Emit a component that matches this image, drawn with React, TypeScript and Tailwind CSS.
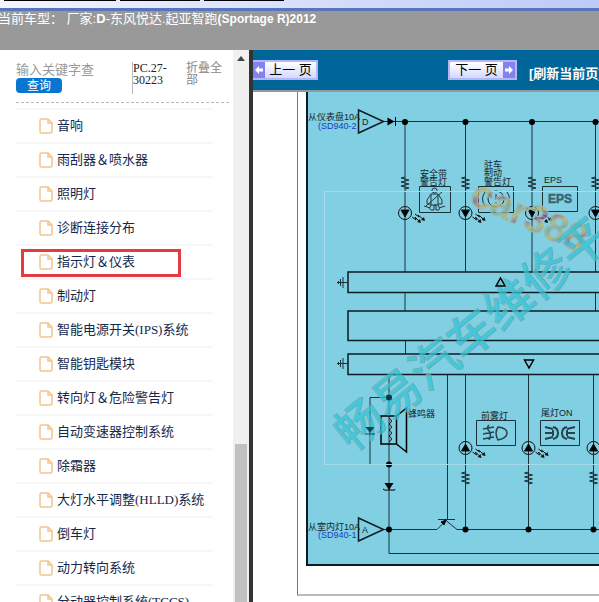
import React from "react";

const items = [
  "音响",
  "雨刮器＆喷水器",
  "照明灯",
  "诊断连接分布",
  "指示灯＆仪表",
  "制动灯",
  "智能电源开关(IPS)系统",
  "智能钥匙模块",
  "转向灯＆危险警告灯",
  "自动变速器控制系统",
  "除霜器",
  "大灯水平调整(HLLD)系统",
  "倒车灯",
  "动力转向系统",
  "分动器控制系统(TCCS)",
];

const selected = "指示灯＆仪表";

const serif = "font-['Liberation_Serif','Noto_Sans_CJK_SC',serif]";
const sans = "font-['Liberation_Sans','Noto_Sans_CJK_SC',sans-serif]";

const FileIcon: React.FC = () => (
  <svg width="14" height="16" viewBox="0 0 14 16" fill="none" stroke="#f3c48c" strokeWidth="1.5">
    <path d="M9 1H2.500Q1 1 1 2.500v11Q1 15 2.500 15h9q1.500 0 1.500-1.500V5zM9 1v4h4" />
  </svg>
);

const Arrow: React.FC<{ left?: boolean }> = ({ left }) => (
  <span className="flex w-3 shrink-0 items-center justify-center bg-[#8282f0]">
    <svg width="8" height="8" viewBox="0 0 8 8" className={left ? "rotate-180" : ""}>
      <path d="M0 2.500h4V0l4 4-4 4V5.500H0z" fill="#fff" />
    </svg>
  </span>
);

const Resistor: React.FC<{ x: number; y: number }> = ({ x, y }) => (
  <path
    d={`M${x} ${y}l-4 1 8 2-8 2 8 2-8 2 8 2-4 1`}
    fill="none"
    stroke="#1c3038"
  />
);

const Led: React.FC<{ x: number; y: number; up?: boolean; rays?: boolean }> = ({ x, y, up, rays = true }) => (
  <g stroke="#111" fill="none">
    <circle cx={x} cy={y} r="6.500" />
    <path d={up ? `M${x - 4} ${y + 3}h8l-4-7z` : `M${x - 4} ${y - 3}h8l-4 7z`} fill="#000" />
    {rays && (
      <>
        <path d={`M${x + 7} ${y + 4}l4 3-1-3 5 5M${x + 10} ${y + 1}l4 3-1-2 6 5`} />
        <path
          d={`M${x + 16} ${y + 10}l-4-1 3-3zM${x + 20} ${y + 8}l-4-1 3-3z`}
          fill="#111"
          stroke="none"
        />
      </>
    )}
  </g>
);

const Diagram: React.FC = () => (
  <svg width="291" height="472" viewBox="308 92 291 472" className={`block ${sans}`}>
    <defs>
      <linearGradient id="rainbow" x1="0" y1="0" x2="9" y2="12" gradientUnits="userSpaceOnUse" spreadMethod="reflect">
        <stop offset="0" stopColor="#77639b" />
        <stop offset="0.5" stopColor="#c3b95b" />
        <stop offset="1" stopColor="#6fa9a0" />
      </linearGradient>
    </defs>

    {/* bus wires */}
    <g fill="none" stroke="#1c3038">
      <path d="M384 121.500H600M405 121V272M465.500 121V272M532 121V272M595.500 121V272" />
      <path d="M405 292v19M405.500 340v14M595.500 292v19M447.500 375V519M465.500 375V529M528.500 375V529M593.500 375V529" />
      <path d="M389 375V553.500H600M389 397.500H370V464.500H389M383 529.500H437l9-9 11 9H600M438 519.500H455" />
      <path d="M337 282.500h11M343 277v11M340.500 279v7M338.500 281v3M337 363.500h11M343 358v11M340.500 360v7M338.500 362v3" />
    </g>
    <g fill="none" stroke="#0c1c22" strokeWidth="1.500">
      <path d="M600 272H348V292.500H600M600 311H348V340.500H600M600 354H348V374.500H600" />
      <path d="M358.500 110v23l25-11.500zM358.500 518v23l25-11.500z" />
    </g>
    <path
      d="M381 416h15.500v28H381zM396.500 416l10-8v44l-10-8"
      fill="none"
      stroke="#000"
      strokeWidth="1.500"
    />
    <path d="M389 418q5 3 0 6q5 3 0 6q5 3 0 6q5 3 0 6" fill="none" stroke="#111" />
    <path d="M387.500 117.500v8l7-4z" fill="#000" />
    <path d="M395.500 117v9" stroke="#000" />
    <path d="M384.500 483h9l-4.500 7z" fill="#000" />
    <path d="M383 489q2 2 4 1h5q3 1 3-1" fill="none" stroke="#000" />
    <path d="M446 520l-5 2 3 3z" fill="#000" stroke="#000" />
    {[405, 465.500, 532, 595.500].map((x) => (
      <g key={x}>
        <circle cx={x} cy="122" r="3" />
        <Resistor x={x} y={177} />
        <Led x={x} y={213} rays={x < 590} />
      </g>
    ))}
    {[465.500, 528.500, 593.500].map((x) => (
      <g key={x}>
        <circle cx={x} cy="529.500" r="3" />
        <Resistor x={x} y={472} />
        <Led x={x} y={448} up rays={x < 590} />
      </g>
    ))}
    <circle cx="389" cy="464.500" r="3" />
    <circle cx="389" cy="529.500" r="3" />

    {/* lamp boxes */}
    <g fill="none" stroke="#1c3038">
      <path d="M419.500 186.500h31v26h-31zM478.500 186.500h35v26h-35zM542.500 186.500h35v25h-35z" />
      <path d="M476.500 420.500h39v25h-39zM540.500 420.500h39v25h-39z" />
      <g stroke="#27373d">
        <circle cx="434.500" cy="190.500" r="2.500" />
        <path d="M431 194l-4 6v4h4M438 194l4 6v4h-4M431 194h7M431 194v11M438 194v11M442 192L426 206M424 206l6 2M445 206l-6 2M431 205q-3 5 1 5h2v-5h2v5h2q3 0 0-5z" />
      </g>
      <circle cx="496" cy="199" r="8" />
      <path d="M485 192q-5 7 0 14M507 192q5 7 0 14M496 194v6M496 202v2" />
      <g stroke="#27444e" strokeWidth="2">
        <path d="M498 427q9 1 9 6t-9 7q-4-7 0-13zM483 429l11-2M483 434l11-2M483 439l11-2M489 425q-3 3 0 6t0 9" strokeWidth="1.500" />
        <path d="M553 427q5 1 5 6t-5 6M553 430v6M567 427q-5 1-5 6t5 6M567 430v6M545 427l8 2M545 433h8M545 439l8-2M575 427l-8 2M575 433h-8M575 439l-8-2" />
      </g>
    </g>

    <g fontSize="9" fill="#16252b">
      <text x="308" y="120">从仪表盘10A</text>
      <text x="420" y="177">安全带</text>
      <text x="420" y="185">警告灯</text>
      <text x="484" y="168">驻车</text>
      <text x="484" y="176">制动</text>
      <text x="484" y="185">警告灯</text>
      <text x="544" y="183">EPS</text>
      <text x="408" y="417">蜂鸣器</text>
      <text x="481" y="419">前雾灯</text>
      <text x="541" y="416">尾灯ON</text>
      <text x="308" y="530">从室内灯10A</text>
      <text x="362" y="125">D</text>
      <text x="362" y="533">A</text>
      <text x="548" y="203" fontSize="12" fontWeight="700" fill="#38646f" stroke="#38646f" strokeWidth="0.500">EPS</text>
    </g>
    <g fontSize="9" fill="#1740c0">
      <text x="318" y="129">(SD940-2</text>
      <text x="318" y="538">(SD940-1</text>
    </g>

    {/* watermark */}
    <path d="M600 191.500H324.500V464.500H600" fill="none" stroke="#a5dcea" />
    <g transform="translate(468 203) rotate(24)" fontSize="39" fontWeight="700">
      <text fill="url(#rainbow)" fillOpacity="0.75" stroke="#a9b5b5" strokeWidth="1">car388</text>
    </g>
    <g transform="translate(352 453) rotate(-39)" fontSize="48" fontWeight="500">
      <text fill="#2cc6d8" fillOpacity="0.75" stroke="#819da0" strokeWidth="0.500">畅易汽车维修平台</text>
    </g>

    {/* markers that stay readable above the watermark */}
    <path d="M496 286l4.500-8 4.500 8zM524.500 360l4.500 8 4.500-8z" fill="none" stroke="#000" strokeWidth="1.500" />
    <circle cx="389" cy="397.500" r="3" fill="#0c3a44" />
    <path d="M365.500 427h9l-4.500 6z" fill="#0c4a52" />
    <path d="M365 434h10" stroke="#0c4a52" />
  </svg>
);

const App: React.FC = () => {
  return (
    <div className="flex h-screen flex-col overflow-hidden bg-white">
      {/* Window strip */}
      <div className="flex h-2 shrink-0 items-start gap-1 bg-linear-to-r from-[#f3f4ff] to-[#bdcaf8] pl-1">
        <span className="h-px w-28 bg-black" />
        <span className="h-px w-20 bg-black" />
        <span className="h-px w-20 bg-black" />
      </div>
      <header className={`h-[42px] shrink-0 overflow-hidden border-t-3 border-[#5874bd] bg-[#999] text-white ${sans}`}>
        <h1 className="-ml-0.5 text-[13px] leading-4 font-normal whitespace-nowrap">
          当前车型： 厂家:<b>D</b>-东风悦达.起亚智跑<span className="text-xs font-bold">(Sportage R)2012</span>
        </h1>
      </header>

      <div className="flex min-h-0 flex-1">
        {/* Sidebar */}
        <aside className={`flex w-[253px] shrink-0 border-r-4 border-[#333] ${serif}`}>
          <div className="min-w-0 flex-1 overflow-hidden pl-4">
            <form className="mr-1 flex h-[53px] border-b border-dashed border-[#bbb] pt-3">
              <div className="flex w-[116px] shrink-0 flex-col items-start">
                <input
                  aria-label="关键字"
                  placeholder="输入关键字查"
                  className="h-4 w-24 text-[13px] leading-4 placeholder:text-[#999]"
                />
                <button type="button" className="h-[15px] w-[46px] rounded-sm bg-[#0876ce] text-xs leading-[14px] text-white">
                  查询
                </button>
              </div>
              <p className="h-8 w-[54px] shrink-0 border-l border-[#bbb] text-xs leading-3 text-[#222]">
                PC.27-
                <br />
                30223
              </p>
              <a href="#" className="w-10 text-xs leading-3 text-[#888]">
                折叠全部
              </a>
            </form>
            <ul className="mt-[5px] mr-5 border-t-2 border-[#f7f7f7]">
              {items.map((item) => (
                <li key={item} className="relative flex h-[34px] items-center border-b-2 border-[#f7f7f7] pl-[23px]">
                  <a href="#" className="flex items-center gap-1 text-[13px] leading-4 whitespace-nowrap text-[#14284b]">
                    <FileIcon />
                    {item}
                  </a>
                  {item === selected && (
                    <span className="absolute top-[3px] left-[5px] h-7 w-40 border-3 border-[#e53b40]" />
                  )}
                </li>
              ))}
            </ul>
          </div>
          <div className="flex w-4 shrink-0 flex-col items-center justify-between bg-[#f0f0f0] pt-1.5">
            <svg width="8" height="5" viewBox="0 0 8 5">
              <path d="M0 5l4-5 4 5z" fill="#444" />
            </svg>
            <span className="h-[158px] w-3 bg-[#c1c1c1]" />
          </div>
        </aside>

        {/* Manual page */}
        <main className="flex min-w-0 flex-1 flex-col overflow-hidden">
          <nav className={`flex h-[42px] shrink-0 items-center overflow-hidden border-b-2 border-[#8e9c9f] bg-[#069] ${sans}`}>
            <button
              type="button"
              className="flex h-5 w-[65px] shrink-0 border-2 border-l-0 border-[#b4b7f5] bg-linear-to-b from-white to-[#d5d8ff] text-[13px] leading-4"
            >
              <Arrow left />
              <span className="flex-1 text-center whitespace-nowrap">上一 页</span>
            </button>
            <button
              type="button"
              className="ml-[130px] flex h-5 w-[69px] shrink-0 border-2 border-[#b4b7f5] bg-linear-to-b from-white to-[#d5d8ff] text-[13px] leading-4"
            >
              <span className="flex-1 text-center whitespace-nowrap">下一 页</span>
              <Arrow />
            </button>
            <a href="#" className="ml-3 pt-2 text-[13px] leading-4 font-bold whitespace-nowrap text-white">
              [刷新当前页]
            </a>
          </nav>
          <div className="ml-11 border-b-2 border-l border-b-[#bbb] border-l-[#777] pb-7 pl-2">
            <div className="overflow-hidden border-b-2 border-l-2 border-[#0c1c22] bg-[#80cfe2]">
              <Diagram />
            </div>
          </div>
        </main>
      </div>
    </div>
  );
};

export default App;
